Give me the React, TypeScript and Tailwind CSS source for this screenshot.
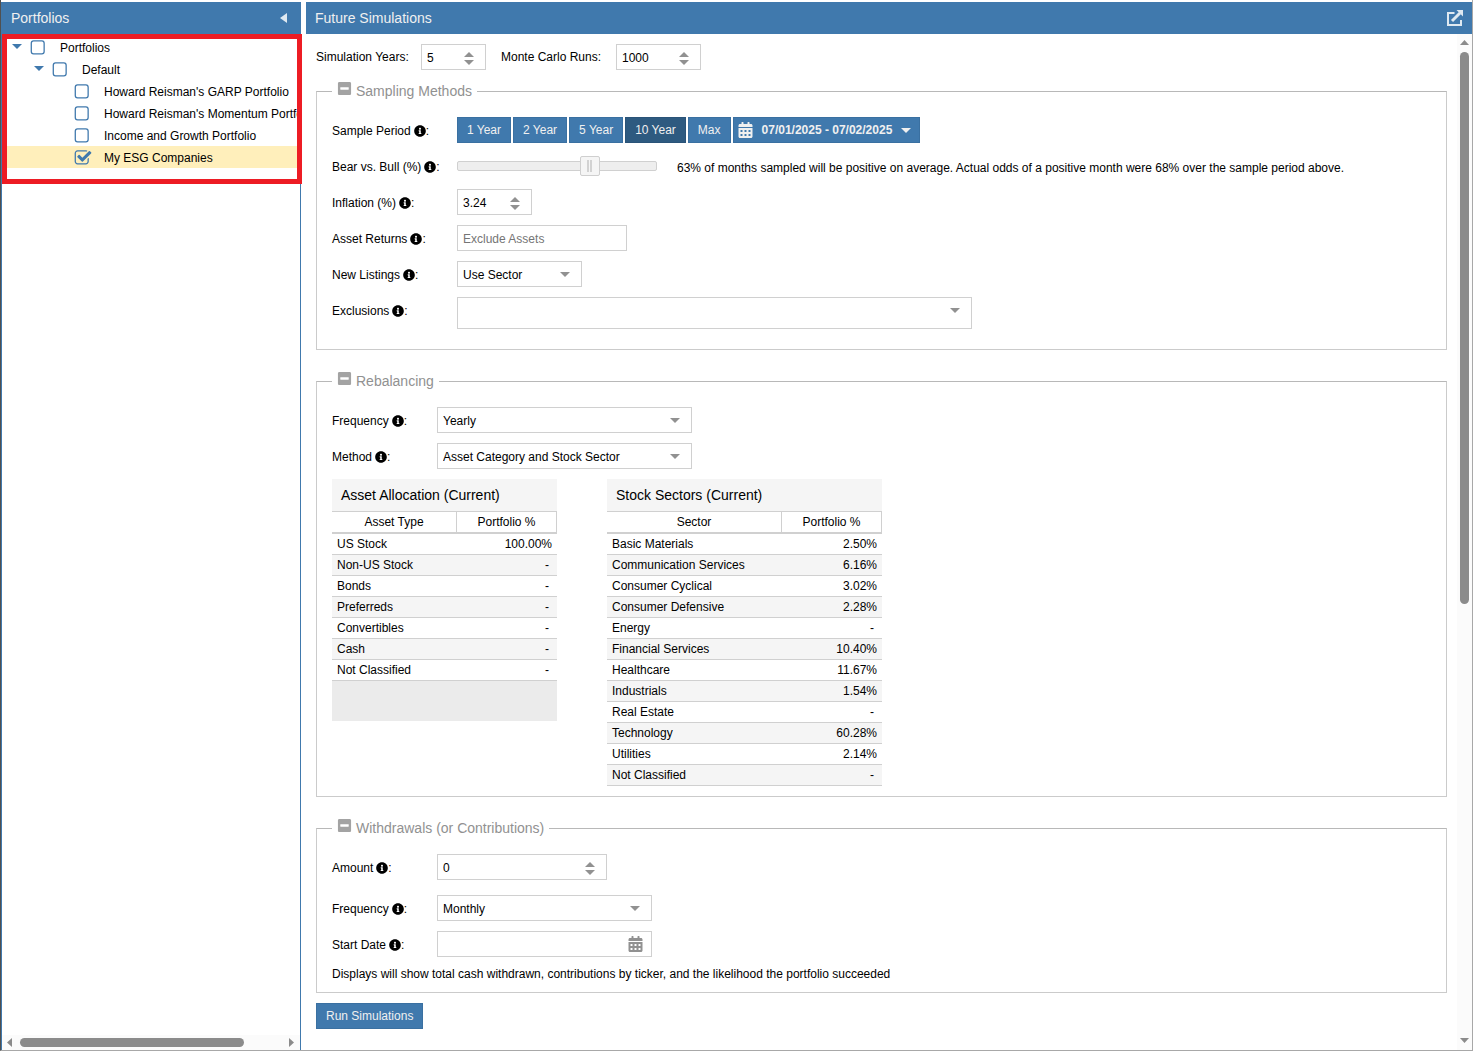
import React, { useId } from "react";
import { FaCalendarAlt, FaInfoCircle, FaMinusSquare } from "react-icons/fa";

type TreeNode = { label: string; level: 0 | 1 | 2; parent?: boolean; checked?: boolean };

const tree: TreeNode[] = [
  { label: "Portfolios", level: 0, parent: true },
  { label: "Default", level: 1, parent: true },
  { label: "Howard Reisman's GARP Portfolio", level: 2 },
  { label: "Howard Reisman's Momentum Portfolio", level: 2 },
  { label: "Income and Growth Portfolio", level: 2 },
  { label: "My ESG Companies", level: 2, checked: true },
];

const indents = { 0: "pl-[10px]", 1: "pl-8", 2: "pl-[54px]" };

const allocation: [string, string][] = [
  ["US Stock", "100.00%"],
  ["Non-US Stock", "-"],
  ["Bonds", "-"],
  ["Preferreds", "-"],
  ["Convertibles", "-"],
  ["Cash", "-"],
  ["Not Classified", "-"],
];

const sectors: [string, string][] = [
  ["Basic Materials", "2.50%"],
  ["Communication Services", "6.16%"],
  ["Consumer Cyclical", "3.02%"],
  ["Consumer Defensive", "2.28%"],
  ["Energy", "-"],
  ["Financial Services", "10.40%"],
  ["Healthcare", "11.67%"],
  ["Industrials", "1.54%"],
  ["Real Estate", "-"],
  ["Technology", "60.28%"],
  ["Utilities", "2.14%"],
  ["Not Classified", "-"],
];

function Triangle({ dir, className = "" }: { dir: "up" | "down" | "left" | "right"; className?: string }) {
  const points = {
    up: "0,10 5,0 10,10",
    down: "0,0 10,0 5,10",
    left: "10,0 10,10 0,5",
    right: "0,0 10,5 0,10",
  }[dir];
  return (
    <svg viewBox="0 0 10 10" preserveAspectRatio="none" aria-hidden="true" className={`block shrink-0 fill-current ${className}`}>
      <polygon points={points} />
    </svg>
  );
}

function TreeRow({ node }: { node: TreeNode }) {
  const id = useId();
  return (
    <li className={`flex h-[22px] items-center pt-0.5 ${indents[node.level]} ${node.checked ? "bg-[#ffefbb]" : ""}`}>
      <span className="flex w-[18px] shrink-0 pb-[3px]">
        {node.parent && (
          <button type="button" aria-label={`Collapse ${node.label}`} className="text-[#4079ad]">
            <Triangle dir="down" className="h-[5px] w-[10px]" />
          </button>
        )}
      </span>
      <span className="relative size-[18px] shrink-0 text-[#4079ad]">
        <input id={id} type="checkbox" defaultChecked={node.checked} className="peer absolute inset-0 appearance-none" />
        <svg viewBox="0 0 1792 1792" className="pointer-events-none block size-[18px] peer-checked:hidden" aria-hidden="true">
          <rect x="128" y="192" width="1280" height="1280" rx="224" fill="none" stroke="currentColor" strokeWidth="128" />
        </svg>
        <svg viewBox="0 0 1792 1792" className="pointer-events-none hidden size-[18px] fill-current peer-checked:block" aria-hidden="true">
          <path d="M1472 930v318q0 119-84.5 203.5t-203.5 84.5h-832q-119 0-203.5-84.5t-84.5-203.5v-832q0-119 84.5-203.5t203.5-84.5h832q63 0 117 25 15 7 18 23 3 17-9 29l-49 49q-10 10-23 10-3 0-9-2-23-6-45-6h-832q-66 0-113 47t-47 113v832q0 66 47 113t113 47h832q66 0 113-47t47-113v-254q0-13 9-22l64-64q10-10 23-10 6 0 12 3 20 8 20 29zm231-489l-814 814q-24 24-57 24t-57-24l-430-430q-24-24-24-57t24-57l110-110q24-24 57-24t57 24l263 263 647-647q24-24 57-24t57 24l110 110q24 24 24 57t-24 57z" />
        </svg>
      </span>
      <label htmlFor={id} className="ml-3 whitespace-nowrap">
        {node.label}
      </label>
    </li>
  );
}

function Row({ id, label, wide, children }: { id: string; label: string; wide?: boolean; children: React.ReactNode }) {
  return (
    <div className="flex items-start">
      <label htmlFor={id} className={`flex h-[26px] shrink-0 items-center pt-px ${wide ? "w-[125px]" : "w-[105px]"}`}>
        {label}
        <FaInfoCircle aria-hidden="true" className="ml-[3px] size-3" />:
      </label>
      {children}
    </div>
  );
}

function Spinner({ id, value, width, inset = "right-3" }: { id: string; value: string; width: string; inset?: string }) {
  return (
    <span className={`relative block h-[26px] ${width}`}>
      <input id={id} type="text" inputMode="decimal" defaultValue={value} className="h-full w-full border border-[#d0d0d0] bg-white pt-0.5 pr-8 pl-[5px]" />
      <span className={`absolute inset-y-0 flex flex-col justify-center gap-[3px] pt-0.5 text-[#919191] ${inset}`}>
        <button type="button" aria-label="Increase">
          <Triangle dir="up" className="h-[5px] w-[10px]" />
        </button>
        <button type="button" aria-label="Decrease">
          <Triangle dir="down" className="h-[5px] w-[10px]" />
        </button>
      </span>
    </span>
  );
}

function Select({ id, value, width }: { id: string; value: string; width: string }) {
  return (
    <span className={`relative block h-[26px] ${width}`}>
      <select id={id} className="h-full w-full appearance-none border border-[#d0d0d0] bg-white pt-0.5 pr-8 pl-[5px]">
        <option>{value}</option>
      </select>
      <span className="pointer-events-none absolute inset-y-0 right-3 flex items-center text-[#919191]">
        <Triangle dir="down" className="h-[5px] w-[10px]" />
      </span>
    </span>
  );
}

function Section({ title, className, children }: { title: string; className: string; children: React.ReactNode }) {
  return (
    <fieldset className={`min-w-0 border border-[#cbcbcb] border-t-[#b8b8b8] px-[15px] pt-[15px] ${className}`}>
      <legend className="flex h-[21px] items-center px-[5px] text-[14px] leading-[21px] text-[#919191]">
        <button type="button" aria-label={`Collapse ${title}`} className="mb-[6px] mr-1 text-[#a3a3a3]">
          <FaMinusSquare className="size-[15px]" />
        </button>
        {title}
      </legend>
      {children}
    </fieldset>
  );
}

function DataTable({ title, head, rows, width, footer }: { title: string; head: string; rows: [string, string][]; width: string; footer?: boolean }) {
  return (
    <section className={width}>
      <h2 className="h-8 bg-[#f5f5f5] px-[9px] text-[14px] leading-8">{title}</h2>
      <table className="w-full table-fixed border-separate border-spacing-0">
        <thead>
          <tr>
            <th className="h-[23px] border-t border-r border-b-2 border-[#d0d0d0] px-0 pt-px pb-0 font-normal leading-[19px]">{head}</th>
            <th className="h-[23px] w-[100px] border-t border-r border-b-2 border-[#d0d0d0] px-0 pt-px pb-0 font-normal leading-[19px]">Portfolio %</th>
          </tr>
        </thead>
        <tbody>
          {rows.map(([name, value]) => (
            <tr key={name} className="even:bg-[#f5f5f5]">
              <td className="h-[21px] border-b border-[#d0d0d0] px-[5px] py-0 leading-5">{name}</td>
              <td className={`h-[21px] border-b border-[#d0d0d0] py-0 text-right leading-5 ${value === "-" ? "pr-2" : "pr-[5px]"}`}>{value}</td>
            </tr>
          ))}
        </tbody>
      </table>
      {footer && <div className="h-10 bg-[#ebebeb]" />}
    </section>
  );
}

export default function App() {
  return (
    <div className="flex min-h-screen flex-col bg-white pr-[7px] pb-[5px] font-['Liberation_Sans',Arial,sans-serif] text-[12px] leading-[14px] text-black">
      <div className="flex grow border-r border-b border-l border-r-[#a8a8a8] border-b-[#a8a8a8] border-l-[#505050] pt-0.5">
        <aside className="flex w-[300px] shrink-0 flex-col">
          <header className="flex h-8 items-center justify-between bg-[#4079ad] pr-[14px] pl-[10px] text-[14px] text-[#f0f0f0]">
            <h1>Portfolios</h1>
            <button type="button" aria-label="Collapse panel" className="text-[#dfe9f1]">
              <Triangle dir="left" className="h-[10px] w-[7px]" />
            </button>
          </header>
          <div className="relative flex grow flex-col border-x border-[#4079ad] pt-0.5">
            <ul className="overflow-hidden">
              {tree.map((node) => (
                <TreeRow key={node.label} node={node} />
              ))}
            </ul>
            <div className="pointer-events-none absolute top-0 left-0 h-[150px] w-[300px] border-[5px] border-[#ed1c24]" />
            <div className="mt-auto flex h-[15px] items-center bg-[#fbfbfb] pr-[6px] pl-[5px] text-[#8b8b8b]">
              <Triangle dir="left" className="h-[9px] w-[5px]" />
              <div className="mx-2 flex grow">
                <div className="h-[9px] w-[86%] rounded-full bg-[#8b8b8b]" />
              </div>
              <Triangle dir="right" className="h-[9px] w-[5px]" />
            </div>
          </div>
        </aside>

        <main className="ml-[5px] flex min-w-0 grow flex-col">
          <header className="flex h-8 items-center justify-between bg-[#4079ad] pr-[9px] pl-[9px] text-[14px] text-[#f0f0f0]">
            <h1>Future Simulations</h1>
            <button type="button" aria-label="Open in new window" className="text-[#dfe9f1]">
              <svg viewBox="0 0 16 16" className="block size-4" aria-hidden="true">
                <path d="M7.500 3H1v12h13V10" fill="none" stroke="currentColor" strokeWidth="2" />
                <path d="M5 11L13 3" fill="none" stroke="currentColor" strokeWidth="3" />
                <path d="M9.500 0H16v6.500z" fill="currentColor" />
              </svg>
            </button>
          </header>
          <div className="flex grow">
            <form className="min-w-0 grow px-[10px] pt-[10px]" onSubmit={(e) => e.preventDefault()}>
              <div className="mb-[11px] flex items-center">
                <label htmlFor="years" className="w-[105px]">
                  Simulation Years:
                </label>
                <Spinner id="years" value="5" width="w-[65px]" />
                <label htmlFor="runs" className="ml-[15px] w-[115px]">
                  Monte Carlo Runs:
                </label>
                <Spinner id="runs" value="1000" width="w-[85px]" />
              </div>

              <Section title="Sampling Methods" className="mb-[21px] pb-5">
                <div className="flex flex-col gap-[10px]">
                  <Row id="period" label="Sample Period" wide>
                    <div className="flex gap-0.5 text-[#f0f0f0]">
                      {["1 Year", "2 Year", "5 Year", "10 Year", "Max"].map((name) => (
                        <button
                          key={name}
                          type="button"
                          className={`h-[26px] border px-[9px] ${name === "10 Year" ? "border-[#2a5378] bg-[#2e5a80]" : "border-[#3a70a1] bg-[#4079ad]"}`}
                        >
                          {name}
                        </button>
                      ))}
                      <button id="period" type="button" className="flex h-[26px] items-center border border-[#3a70a1] bg-[#4079ad] pr-2 pl-1 font-bold">
                        <FaCalendarAlt aria-hidden="true" className="mr-[9px] h-4 w-[15px]" />
                        07/01/2025 - 07/02/2025
                        <Triangle dir="down" className="ml-[9px] h-[5px] w-[10px]" />
                      </button>
                    </div>
                  </Row>
                  <Row id="bull" label="Bear vs. Bull (%)" wide>
                    <div className="flex h-[26px] items-center">
                      <input
                        id="bull"
                        type="range"
                        min={0}
                        max={92}
                        defaultValue={63}
                        className="h-5 w-[200px] shrink-0 appearance-none bg-transparent [&::-webkit-slider-runnable-track]:h-[10px] [&::-webkit-slider-runnable-track]:rounded-xs [&::-webkit-slider-runnable-track]:border [&::-webkit-slider-runnable-track]:border-[#d0d0d0] [&::-webkit-slider-runnable-track]:bg-[#eeeeee] [&::-webkit-slider-thumb]:-mt-1.5 [&::-webkit-slider-thumb]:size-5 [&::-webkit-slider-thumb]:appearance-none [&::-webkit-slider-thumb]:rounded-xs [&::-webkit-slider-thumb]:border [&::-webkit-slider-thumb]:border-[#cfcfcf] [&::-webkit-slider-thumb]:bg-[#f5f5f5] [&::-webkit-slider-thumb]:bg-[linear-gradient(90deg,#d2d2d2_2px,transparent_2px,transparent_3px,#d2d2d2_3px)] [&::-webkit-slider-thumb]:bg-[size:5px_12px] [&::-webkit-slider-thumb]:bg-center [&::-webkit-slider-thumb]:bg-no-repeat"
                      />
                      <p className="ml-5 pt-[3px]">63% of months sampled will be positive on average. Actual odds of a positive month were 68% over the sample period above.</p>
                    </div>
                  </Row>
                  <Row id="inflation" label="Inflation (%)" wide>
                    <Spinner id="inflation" value="3.24" width="w-[75px]" />
                  </Row>
                  <Row id="returns" label="Asset Returns" wide>
                    <input id="returns" type="text" placeholder="Exclude Assets" className="h-[26px] w-[170px] border border-[#d0d0d0] px-[5px] pt-0.5 placeholder:text-[#757575]" />
                  </Row>
                  <Row id="listings" label="New Listings" wide>
                    <Select id="listings" value="Use Sector" width="w-[125px]" />
                  </Row>
                  <Row id="exclusions" label="Exclusions" wide>
                    <span className="relative block h-8 w-[515px]">
                      <input id="exclusions" type="text" className="h-full w-full border border-[#d0d0d0] pr-8 pl-[5px]" />
                      <button type="button" aria-label="Show exclusions" className="absolute top-[11px] right-3 text-[#919191]">
                        <Triangle dir="down" className="h-[5px] w-[10px]" />
                      </button>
                    </span>
                  </Row>
                </div>
              </Section>

              <Section title="Rebalancing" className="mb-[21px] pb-[10px]">
                <div className="flex flex-col gap-[10px]">
                  <Row id="rebalance-frequency" label="Frequency">
                    <Select id="rebalance-frequency" value="Yearly" width="w-[255px]" />
                  </Row>
                  <Row id="method" label="Method">
                    <Select id="method" value="Asset Category and Stock Sector" width="w-[255px]" />
                  </Row>
                  <div className="flex items-start gap-[50px]">
                    <DataTable title="Asset Allocation (Current)" head="Asset Type" rows={allocation} width="w-[225px]" footer />
                    <DataTable title="Stock Sectors (Current)" head="Sector" rows={sectors} width="w-[275px]" />
                  </div>
                </div>
              </Section>

              <Section title="Withdrawals (or Contributions)" className="mb-[10px] pb-[11px]">
                <div className="mb-[15px]">
                  <Row id="amount" label="Amount">
                    <Spinner id="amount" value="0" width="w-[170px]" />
                  </Row>
                </div>
                <div className="flex flex-col gap-[10px]">
                  <Row id="withdraw-frequency" label="Frequency">
                    <Select id="withdraw-frequency" value="Monthly" width="w-[215px]" />
                  </Row>
                  <Row id="start" label="Start Date">
                    <span className="relative block h-[26px] w-[215px]">
                      <input id="start" type="text" className="h-full w-full border border-[#d0d0d0] pr-8 pl-[5px]" />
                      <button type="button" aria-label="Pick a date" className="absolute top-[5px] right-[9px] text-[#919191]">
                        <FaCalendarAlt className="h-4 w-[15px]" />
                      </button>
                    </span>
                  </Row>
                  <p>Displays will show total cash withdrawn, contributions by ticker, and the likelihood the portfolio succeeded</p>
                </div>
              </Section>

              <button type="submit" className="h-[26px] border border-[#3a70a1] bg-[#4079ad] px-[9px] text-[#f0f0f0]">
                Run Simulations
              </button>
            </form>
            <div className="flex w-[15px] shrink-0 flex-col items-center bg-[#fbfbfb] pt-[6px] pb-[7px] text-[#8b8b8b]">
              <Triangle dir="up" className="h-[5px] w-[9px]" />
              <div className="my-[7px] w-[9px] grow">
                <div className="h-[56.4%] rounded-full bg-[#8b8b8b]" />
              </div>
              <Triangle dir="down" className="h-[5px] w-[9px]" />
            </div>
          </div>
        </main>
      </div>
    </div>
  );
}
